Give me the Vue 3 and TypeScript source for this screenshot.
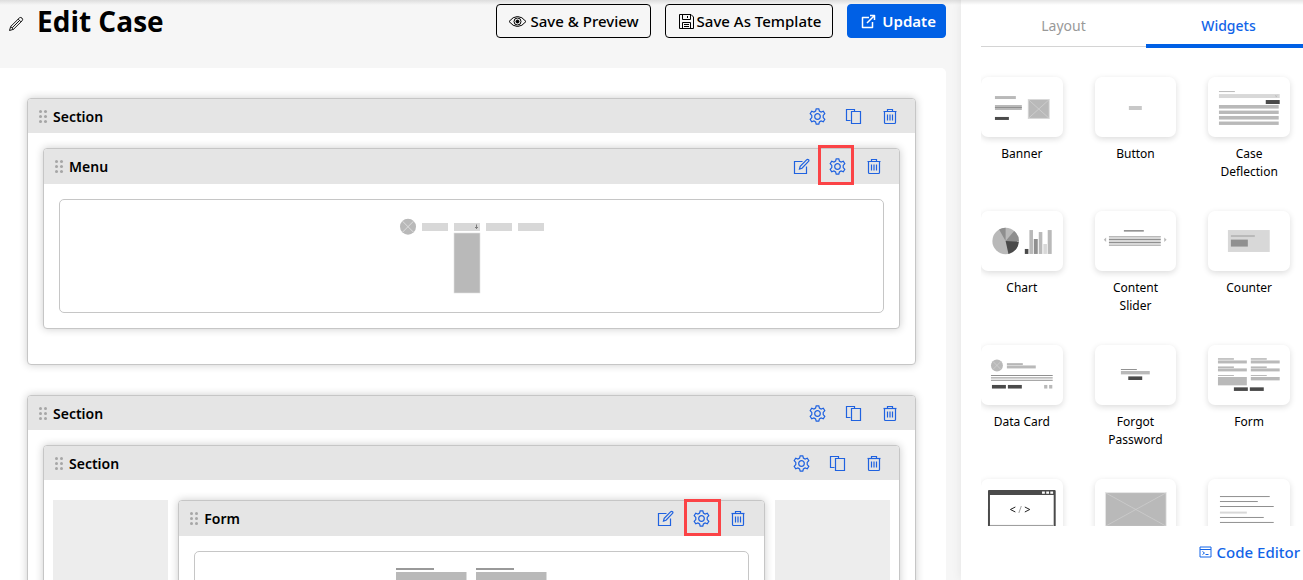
<script setup lang="ts">
import { defineComponent, h, ref } from 'vue'

type Box = [x: number, y: number, w: number, h: number, fill: string]
interface Widget {
  id: string
  label?: string
  top?: number
  boxes: Box[]
}

const L = '#d8d8d8'
const M = '#b9b9b9'
const G = '#909090'
const D = '#4a4a4a'

const widgets: Widget[] = [
  { id: 'banner', label: 'Banner', boxes: [[14, 19, 21, 3, M], [14, 28, 27, 5, M], [14, 30, 27, 1, G], [14, 40, 14, 3, D], [47, 22, 22, 20, L], [48, 23, 20, 18, M]] },
  { id: 'button', label: 'Button', boxes: [[34, 29, 13, 4, '#c8c8c8']] },
  { id: 'case', label: 'Case Deflection', boxes: [[11, 14, 16, 1, M], [11, 17, 61, 4, L], [58, 23, 14, 4, D], [11, 28, 60, 3.6, M], [11, 33.6, 60, 3.4, M], [11, 39, 60, 3.6, M], [11, 44.6, 60, 3.4, M]] },
  { id: 'chart', label: 'Chart', top: 1, boxes: [[44, 39, 3.6, 5, D], [48.6, 20, 3.6, 24, M], [53, 29, 4, 15, G], [58, 22, 3.6, 22, M], [62.6, 34, 3.6, 10, L], [67, 20, 4, 24, M]] },
  { id: 'slider', label: 'Content Slider', top: 1, boxes: [[29, 20, 20, 1.6, G], [14, 26, 52, 10, L], [14, 26, 52, 1, M], [14, 29, 52, 1, G], [14, 32, 52, 1, G], [14, 35, 52, 1, M]] },
  { id: 'counter', label: 'Counter', top: 1, boxes: [[20, 20, 42, 22, L], [23, 25, 24, 2, M], [23, 29.6, 17, 7, G]] },
  { id: 'data', label: 'Data Card', top: 1, boxes: [[26, 19.4, 16, 1.2, G], [26, 21.4, 29, 3, M], [10, 31, 62, 1, G], [10, 33.4, 62, 1, G], [10, 35.8, 62, 1, G], [11, 41, 14, 3.6, D], [27, 41, 14, 3.6, D], [63.4, 41, 3.2, 3.6, M], [68.4, 41, 3.2, 3.6, M]] },
  { id: 'forgot', label: 'Forgot Password', top: 1, boxes: [[26, 25, 16, 1, G], [26, 27, 29, 3.4, M], [33.4, 32.4, 14, 3.6, D]] },
  { id: 'form', label: 'Form', top: 1, boxes: [[10, 14.4, 16, 1, G], [10, 16.4, 29, 3, M], [43, 14.4, 16, 1, G], [43, 16.4, 29, 3, M], [10, 22.6, 16, 1, G], [10, 24.4, 29, 3, M], [43, 22.6, 16, 1, G], [43, 24.4, 29, 3, M], [10, 31, 16, 1, M], [10, 33, 29, 8.4, M], [43, 31, 16, 1, M], [43, 33, 29, 3.4, M], [26, 43.4, 14, 3.6, D], [42, 43.4, 14, 3.6, D]] },
  { id: 'html', boxes: [] },
  { id: 'image', boxes: [[10, 13, 62, 36, '#e6e6e6'], [11, 14, 60, 33, M]] },
  { id: 'text', boxes: [[12, 17, 50, 1, G], [12, 22, 38, 1, G], [12, 27, 54, 1, G], [12, 32.6, 27, 2, L], [12, 38, 44, 1, G], [12, 43, 54, 1, G]] },
]

const tabs = ['Layout', 'Widgets']
const activeTab = ref('Widgets')

const icons: Record<string, string[]> = {
  Settings: [
    'M7.2 .8h2.6l.6 2.2 1.7 1 2.2-.7 1.5 2.4-1.6 1.7v2.2l1.6 1.7-1.5 2.4-2.2-.7-1.7 1-.6 2.2H7.2L6.600 14l-1.700-1-2.200.7-1.500-2.400 1.600-1.700V7.400L1.200 5.700l1.500-2.400 2.200.7 1.700-1z',
    'M8.500 5.700a2.800 2.800 0 1 0 0 5.600 2.800 2.800 0 0 0 0-5.600z',
  ],
  Copy: ['M5.500 12.500H1.500V1.500H9.500V3.500', 'M6.500 3.500H15.500V15.500H6.500z'],
  Delete: ['M2.500 3.500H15.500', 'M6.500 3.500V1.500H11.500V3.500', 'M3.500 4V14.500Q3.500 15.500 4.500 15.500H13.500Q14.500 15.500 14.500 14.500V4', 'M6.500 6.500V12.500M9 6.500V12.500M11.500 6.500V12.500'],
  Edit: ['M9.500 3.500H1.500V15.500H13.500V8.500', 'M6.500 11 7.200 8.300 13.800 1.700Q14.600 1 15.500 1.700 16.300 2.500 15.500 3.400L9 10.200z'],
}

const IconActions = defineComponent({
  props: { names: { type: Array as () => string[], required: true }, marked: String },
  setup(props) {
    return () =>
      h('div', { class: 'actions' }, props.names.map((name) =>
        h('button', { class: ['action', name === 'Settings' && props.marked ? `marked ${props.marked}` : ''], type: 'button', 'aria-label': name }, [
          h('svg', { viewBox: '0 0 17 17', width: 17, height: 17 }, icons[name].map((d) => h('path', { d }))),
        ]),
      ))
  },
})

const DragHandle = defineComponent({
  setup: () => () =>
    h('svg', { class: 'handle', viewBox: '0 0 9 13', width: 9, height: 13 },
      [1.5, 6.5, 11.5].flatMap((cy) => [1.5, 6.5].map((cx) => h('circle', { cx, cy, r: 1.5 })))),
})

const sectionActions = ['Settings', 'Copy', 'Delete']
const widgetActions = ['Edit', 'Settings', 'Delete']
</script>

<template>
  <div class="app">
    <div class="top-shade"></div>
    <main class="editor">
      <header class="toolbar">
        <button class="rename" type="button" aria-label="Rename">
          <svg viewBox="0 0 16 16" width="16" height="16"><path d="M1.500 14.500 2.700 10.500 11.400 1.900Q12.700 .9 14 2.100 15.200 3.300 14.200 4.700L5.500 13.300zM2.700 10.500 5.500 13.300M10.200 3.100 12.900 5.800M4.200 11.800 11.500 4.500" /></svg>
        </button>
        <h1>Edit Case</h1>
        <div class="buttons">
          <button class="btn" type="button">
            <svg viewBox="0 0 19 13" width="19" height="13"><path d="M1 6.500Q5 1.500 9.500 1.500T18 6.500Q14 11.500 9.500 11.500T1 6.500z" /><circle cx="9.500" cy="6.500" r="3.500" /><circle cx="9.500" cy="6.500" r="1.500" class="solid" /></svg>
            <span>Save &amp; Preview</span>
          </button>
          <button class="btn template" type="button">
            <svg viewBox="0 0 15 15" width="15" height="15"><path d="M.500 .500H12L14.500 3V14.500H.500zM3.500 1V5.500H11.500V1M8.500 2V4M3.500 14V8.500H11.500V14M5 10.500H10M5 12.500H10" /></svg>
            <span>Save As Template</span>
          </button>
          <button class="btn primary" type="button">
            <svg viewBox="0 0 15 15" width="15" height="15"><path d="M8 3.500H1.500V13.500H11.500V8M9 1.500H13.500V6M13.500 1.500 6 9" /></svg>
            <span>Update</span>
          </button>
        </div>
      </header>

      <div class="canvas">
        <section class="card first">
          <div class="card-head"><DragHandle /><h2>Section</h2><IconActions :names="sectionActions" /></div>
          <div class="card-body">
            <section class="card widget">
              <div class="card-head"><DragHandle /><h2>Menu</h2><IconActions :names="widgetActions" marked="tall" /></div>
              <div class="card-body">
                <div class="preview">
                  <svg viewBox="0 0 146 76" width="146" height="76">
                    <circle cx="9" cy="8.700" r="8" fill="#b9b9b9" />
                    <path d="M3.500 3.200 14.500 14.200M14.500 3.200 3.500 14.200" stroke="#dedede" />
                    <rect v-for="x in [23, 55, 87, 119]" :key="x" :x="x" y="5" width="26" height="8" fill="#d8d8d8" />
                    <path d="M77.500 6.500V10.500M76 9 77.500 10.500 79 9" stroke="#666" stroke-width=".8" fill="none" />
                    <rect x="55" y="15" width="26" height="60" fill="#b9b9b9" stroke="#e2e2e2" stroke-width=".6" />
                  </svg>
                </div>
              </div>
            </section>
          </div>
        </section>

        <section class="card">
          <div class="card-head"><DragHandle /><h2>Section</h2><IconActions :names="sectionActions" /></div>
          <div class="card-body">
            <section class="card">
              <div class="card-head"><DragHandle /><h2>Section</h2><IconActions :names="sectionActions" /></div>
              <div class="columns">
                <div class="empty"></div>
                <section class="card widget">
                  <div class="card-head"><DragHandle /><h2>Form</h2><IconActions :names="widgetActions" marked="square" /></div>
                  <div class="card-body">
                    <div class="preview form-preview">
                      <svg viewBox="0 0 151 76" width="151" height="76">
                        <g v-for="x in [0, 80]" :key="x">
                          <rect :x="x" y="0" width="38" height="2" fill="#999" />
                          <rect :x="x" y="4" width="70.500" height="9" fill="#b9b9b9" />
                        </g>
                      </svg>
                    </div>
                  </div>
                </section>
                <div class="empty"></div>
              </div>
            </section>
          </div>
        </section>
      </div>
    </main>

    <aside class="sidebar">
      <div class="tabs" role="tablist">
        <button v-for="tab in tabs" :key="tab" class="tab" :class="{ active: tab === activeTab }" type="button" role="tab" :aria-selected="tab === activeTab" @click="activeTab = tab">{{ tab }}</button>
      </div>
      <ul class="widgets">
        <li v-for="widget in widgets" :key="widget.id">
          <svg class="thumb" :viewBox="`0 ${widget.top ?? 0} 82 60`">
            <rect v-for="(b, i) in widget.boxes" :key="i" :x="b[0]" :y="b[1]" :width="b[2]" :height="b[3]" :fill="b[4]" />
            <path v-if="widget.id === 'banner'" d="M48 23 68 41M68 23 48 41" stroke="#d4d4d4" stroke-width=".7" />
            <path v-if="widget.id === 'case'" d="M67.500 18.500 68.500 19.500 69.500 18.500" stroke="#999" stroke-width=".6" fill="none" />
            <g v-if="widget.id === 'chart'">
              <circle cx="24.700" cy="31" r="13.300" fill="#b9b9b9" />
              <path d="M24.700 31 33.300 20.900A13.300 13.300 0 0 1 38 31.600z" fill="#8e8e8e" />
              <path d="M24.700 31 38 31.600A13.300 13.300 0 0 1 27.600 44z" fill="#4a4a4a" />
              <path d="M24.700 31 18.200 19.400A13.300 13.300 0 0 1 24.700 17.700z" fill="#8e8e8e" />
            </g>
            <path v-if="widget.id === 'slider'" d="M11.200 27.500V32L8.800 29.700zM69.500 27.500V32L71.900 29.700z" fill="#b9b9b9" />
            <g v-if="widget.id === 'data'">
              <circle cx="16" cy="21.400" r="6" fill="#b9b9b9" />
              <path d="M12 17.400 20 25.400M20 17.400 12 25.400" stroke="#d8d8d8" stroke-width=".6" />
            </g>
            <g v-if="widget.id === 'html'">
              <path d="M7 60V12Q7 11 8 11H74Q75 11 75 12V60H73V16H9V60z" fill="#4a4a4a" />
              <path d="M61.300 12.400h2.800v2.400h-2.800zM65.500 12.400h2.800v2.400h-2.800zM69.600 12.400h2.800v2.400h-2.800z" fill="#fff" />
              <rect x="9" y="46" width="64" height="1" fill="#999" />
              <path d="M34.500 28 29.500 30.500 34.500 33M44 28 49 30.500 44 33" stroke="#222" fill="none" />
              <path d="M40.500 27 38 34" stroke="#888" stroke-width=".8" />
            </g>
            <path v-if="widget.id === 'image'" d="M11 14 71 47M71 14 11 47" stroke="#d0d0d0" stroke-width=".7" />
          </svg>
          <span v-if="widget.label" class="label">{{ widget.label }}</span>
        </li>
      </ul>
      <a class="code-link" href="#">
        <svg viewBox="0 0 13 12" width="13" height="12"><path d="M1 1H12V11H1zM1 3.500H12M3.500 5.500 5.500 7 3.500 8.500M6.500 8.500H9.500" /></svg>
        Code Editor
      </a>
    </aside>
  </div>
</template>

<style>
body {
  margin: 0;
}
</style>

<style scoped>
.app {
  position: relative;
  display: flex;
  height: 100vh;
  overflow: hidden;
  background: #f6f6f6;
  color: #000;
  font: 14px/20px "Noto Sans", "Open Sans", sans-serif;
}
.app button {
  font-family: inherit;
  cursor: pointer;
}
.top-shade {
  position: absolute;
  z-index: 3;
  top: 0;
  left: 0;
  right: 0;
  height: 5px;
  background: linear-gradient(rgba(0, 0, 0, 0.1), rgba(0, 0, 0, 0));
  pointer-events: none;
}
.editor {
  flex: 1;
  min-width: 0;
  display: flex;
  flex-direction: column;
  padding-right: 15px;
}
.toolbar {
  display: flex;
  align-items: center;
  flex: none;
  padding: 4px 0 30px 8px;
}
.rename {
  display: flex;
  margin-right: 13px;
  padding: 6px 0 0;
  border: 0;
  background: none;
}
svg path {
  stroke-linejoin: round;
}
.rename path {
  fill: none;
  stroke: #111;
}
h1 {
  margin: 0;
  font-family: "Open Sans", "Noto Sans", sans-serif;
  font-size: 28px;
  line-height: 34px;
  font-weight: 700;
}
.buttons {
  display: flex;
  gap: 14px;
  margin-left: auto;
}
.btn {
  display: flex;
  align-items: center;
  gap: 4px;
  height: 34px;
  padding: 0 11px;
  border: 1px solid #000;
  border-radius: 4px;
  background: transparent;
  color: #000;
  font-size: 15px;
  font-weight: 500;
}
.btn.template {
  gap: 3px;
  padding-left: 13px;
}
.btn.primary {
  gap: 6px;
  padding: 0 9px 0 13px;
  border-color: #0060e5;
  background: #0060e5;
  color: #fff;
  font-weight: 600;
}
.btn svg {
  fill: none;
  stroke: currentColor;
}
.btn.primary svg {
  stroke-width: 1.5;
}
.btn .solid {
  fill: #000;
}
.canvas {
  flex: 1;
  min-height: 0;
  overflow: hidden;
  padding: 30px 30px 0 27px;
  border-radius: 0 5px 0 0;
  background: #fff;
}
.card {
  border: 1px solid #c6c6c6;
  border-radius: 4px;
  background: #fff;
  box-shadow: 0 0 8px rgba(0, 0, 0, 0.2);
}
.card.first {
  margin-bottom: 30px;
  padding-bottom: 20px;
}
.card-head {
  display: flex;
  align-items: center;
  height: 34px;
  padding: 0 8px 0 11px;
  border-radius: 3px 3px 0 0;
  background: #e5e5e5;
}
.widget > .card-head {
  height: 35px;
}
:deep(.handle) {
  fill: #a6a6a6;
}
h2 {
  flex: 1;
  margin: 0 0 0 5px;
  padding-top: 1px;
  font-size: 14px;
  line-height: 20px;
  font-weight: 600;
}
:deep(.actions) {
  display: flex;
  align-self: stretch;
}
:deep(.action) {
  position: relative;
  display: flex;
  align-items: center;
  justify-content: center;
  width: 36px;
  padding: 0;
  border: 0;
  background: none;
}
:deep(.action path) {
  fill: none;
  stroke: #1f62e0;
  stroke-width: 1.2;
}
:deep(.marked::after) {
  content: "";
  position: absolute;
  border: 3px solid #fb4346;
}
:deep(.tall::after) {
  inset: -4px 1px -1px -1px;
}
:deep(.square::after) {
  inset: -2px -1px 0 0;
}
.card-body {
  padding: 15px;
}
.preview {
  display: flex;
  justify-content: center;
  padding: 18px 0;
  border: 1px solid #c6c6c6;
  border-radius: 5px;
}
.form-preview {
  padding-top: 16px;
}
.columns {
  display: grid;
  grid-template-columns: 23fr 117fr 23fr;
  gap: 10px;
  padding: 20px 9px;
}
.empty {
  background: #ededed;
}
.sidebar {
  flex: 0 0 322px;
  display: flex;
  flex-direction: column;
  overflow: hidden;
  padding-left: 20px;
  background: #fff;
  box-shadow: 0 0 10px rgba(0, 0, 0, 0.08);
}
.tabs {
  display: flex;
  flex: none;
  width: 330px;
  height: 48px;
}
.tab {
  flex: 1;
  height: 47px;
  padding: 5px 0 0;
  border: 0;
  border-bottom: 1px solid #d4d4d4;
  background: none;
  color: #999;
  font-size: 14px;
}
.tab.active {
  height: 48px;
  padding-top: 6px;
  border-bottom: 4px solid #0060e5;
  color: #1264e8;
  font-weight: 500;
}
.widgets {
  flex: 1;
  min-height: 0;
  overflow: hidden;
  display: grid;
  grid-template-columns: repeat(3, 1fr);
  grid-auto-rows: max-content;
  gap: 30px 32px;
  width: 309px;
  margin: 0;
  padding: 29px 13px 0 0;
  list-style: none;
}
.widgets li {
  display: flex;
  flex-direction: column;
  align-items: center;
}
.thumb {
  width: 100%;
  height: 60px;
  margin-bottom: 8px;
  border-radius: 7px;
  background: #fff;
  box-shadow: 0 2px 6px rgba(0, 0, 0, 0.14);
}
.label {
  padding: 0 4px;
  font-size: 12px;
  line-height: 18px;
  text-align: center;
}
.code-link {
  display: flex;
  align-items: center;
  justify-content: flex-end;
  gap: 5px;
  flex: none;
  height: 52px;
  padding: 0 3px 2px 0;
  color: #1264e8;
  font-size: 15px;
  font-weight: 500;
  text-decoration: none;
}
.code-link path {
  fill: none;
  stroke: currentColor;
}
</style>
